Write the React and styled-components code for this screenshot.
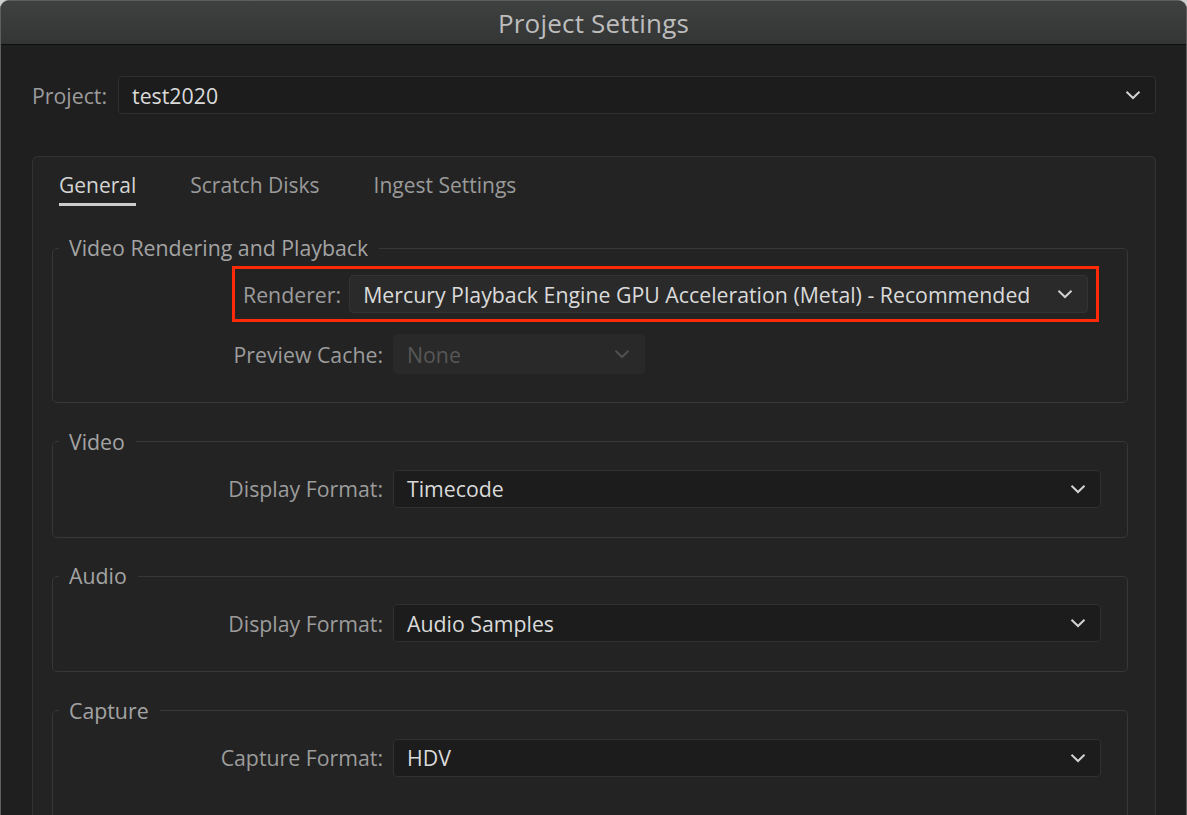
import React from "react";
import styled, { createGlobalStyle } from "styled-components";

const Global = createGlobalStyle`
  html, body { margin: 0; padding: 0; background: #cfcfcf; }
  body { font-family: "Open Sans", "Noto Sans", sans-serif; -webkit-font-smoothing: antialiased; }
  * { box-sizing: border-box; }
`;

const Window = styled.div`
  width: 1187px;
  height: 815px;
  overflow: hidden;
  background: #1f1f1f;
  border: 1px solid #5e5e5e;
  border-bottom: none;
  border-radius: 9px 9px 0 0;
  display: flex;
  flex-direction: column;
`;

const TitleBar = styled.div`
  height: 44px;
  flex: none;
  display: flex;
  align-items: center;
  justify-content: center;
  background: linear-gradient(#3f4040, #343535);
  border-bottom: 1px solid #0d0d0d;
  color: #bdbdbd;
  font-size: 26px;
  letter-spacing: 0.2px;
`;

const Body = styled.div`
  flex: 1;
  padding: 31px 30px 0 31px;
  display: flex;
  flex-direction: column;
`;

const ProjectRow = styled.div`
  display: flex;
  align-items: center;
  gap: 11px;
  color: #9c9c9c;
  font-size: 21.3px;
`;

const Select = styled.div`
  flex: ${(p) => (p.$w ? "none" : "1")};
  width: ${(p) => (p.$w ? `${p.$w}px` : "auto")};
  height: ${(p) => p.$h || 38}px;
  display: flex;
  align-items: center;
  justify-content: space-between;
  padding: 0 14px 0 13px;
  border-radius: 4px;
  background: ${(p) => (p.$disabled ? "#292929" : p.$raised ? "#2a2a2a" : "#1c1c1c")};
  border: 1px solid ${(p) => (p.$disabled ? "#292929" : p.$raised ? "#333" : "#303030")};
  color: ${(p) => (p.$disabled ? "#575757" : "#dadada")};
  font-size: 21.3px;
  white-space: nowrap;
`;

const Chevron = ({ dim }) => (
  <svg width="16" height="10" viewBox="0 0 16 10" fill="none">
    <path d="M1.5 1.8 L8 8 L14.5 1.8" stroke={dim ? "#505050" : "#d2d2d2"} strokeWidth="2" />
  </svg>
);

const Panel = styled.div`
  margin-top: 42px;
  flex: 1;
  background: #232323;
  border: 1px solid #333;
  border-bottom: none;
  border-radius: 6px 6px 0 0;
  padding: 13px 27px 0 19px;
`;

const Tabs = styled.div`
  display: flex;
  gap: 54px;
  padding-left: 7px;
`;

const Tab = styled.div`
  font-size: 21px;
  color: ${(p) => (p.$active ? "#d4d4d4" : "#9a9a9a")};
  padding-bottom: 3px;
  border-bottom: 3px solid ${(p) => (p.$active ? "#cccccc" : "transparent")};
  line-height: 30px;
`;

const Group = styled.fieldset`
  margin: ${(p) => (p.$first ? "30px" : "26.5px")} 0 0 0;
  padding: 0;
  border: 1px solid #373737;
  border-radius: 5px;
  min-width: 0;
`;

const Legend = styled.legend`
  margin-left: 6px;
  padding: 0 11px 0 10px;
  font-size: 21.3px;
  line-height: 24px;
  color: #a3a3a3;
`;

const GroupBody = styled.div`
  padding: ${(p) => p.$pad || "16px 26px 29px 0"};
  display: flex;
  flex-direction: column;
  gap: ${(p) => p.$gap || "0px"};
`;

const Highlight = styled.div`
  margin-left: 179px;
  margin-right: 28px;
  border: 3px solid #ff2a08;
  padding: 6px 8px 6px 8px;
  display: flex;
  align-items: center;
  gap: 8px;
`;

const FieldRow = styled.div`
  display: grid;
  grid-template-columns: 330px auto;
  column-gap: 10px;
  align-items: center;
`;

const Label = styled.div`
  font-size: 21.3px;
  color: #9c9c9c;
  text-align: right;
  white-space: nowrap;
`;

const Field = ({ label, value }) => (
  <FieldRow>
    <Label>{label}</Label>
    <Select>
      <span>{value}</span>
      <Chevron />
    </Select>
  </FieldRow>
);

export default function App() {
  return (
    <>
      <Global />
      <Window>
        <TitleBar>Project Settings</TitleBar>
        <Body>
          <ProjectRow>
            <span>Project:</span>
            <Select>
              <span>test2020</span>
              <Chevron />
            </Select>
          </ProjectRow>
          <Panel>
            <Tabs>
              <Tab $active>General</Tab>
              <Tab>Scratch Disks</Tab>
              <Tab>Ingest Settings</Tab>
            </Tabs>

            <Group $first>
              <Legend>Video Rendering and Playback</Legend>
              <GroupBody $pad="6px 0 28px 0" $gap="12px">
                <Highlight>
                  <Label>Renderer:</Label>
                  <Select $raised>
                    <span>Mercury Playback Engine GPU Acceleration (Metal) - Recommended</span>
                    <Chevron />
                  </Select>
                </Highlight>
                <FieldRow>
                  <Label>Preview Cache:</Label>
                  <Select $disabled $w={252} $h={40}>
                    <span>None</span>
                    <Chevron dim />
                  </Select>
                </FieldRow>
              </GroupBody>
            </Group>

            <Group>
              <Legend>Video</Legend>
              <GroupBody>
                <Field label="Display Format:" value="Timecode" />
              </GroupBody>
            </Group>

            <Group>
              <Legend>Audio</Legend>
              <GroupBody>
                <Field label="Display Format:" value="Audio Samples" />
              </GroupBody>
            </Group>

            <Group>
              <Legend>Capture</Legend>
              <GroupBody $pad="16px 26px 80px 0">
                <Field label="Capture Format:" value="HDV" />
              </GroupBody>
            </Group>
          </Panel>
        </Body>
      </Window>
    </>
  );
}
